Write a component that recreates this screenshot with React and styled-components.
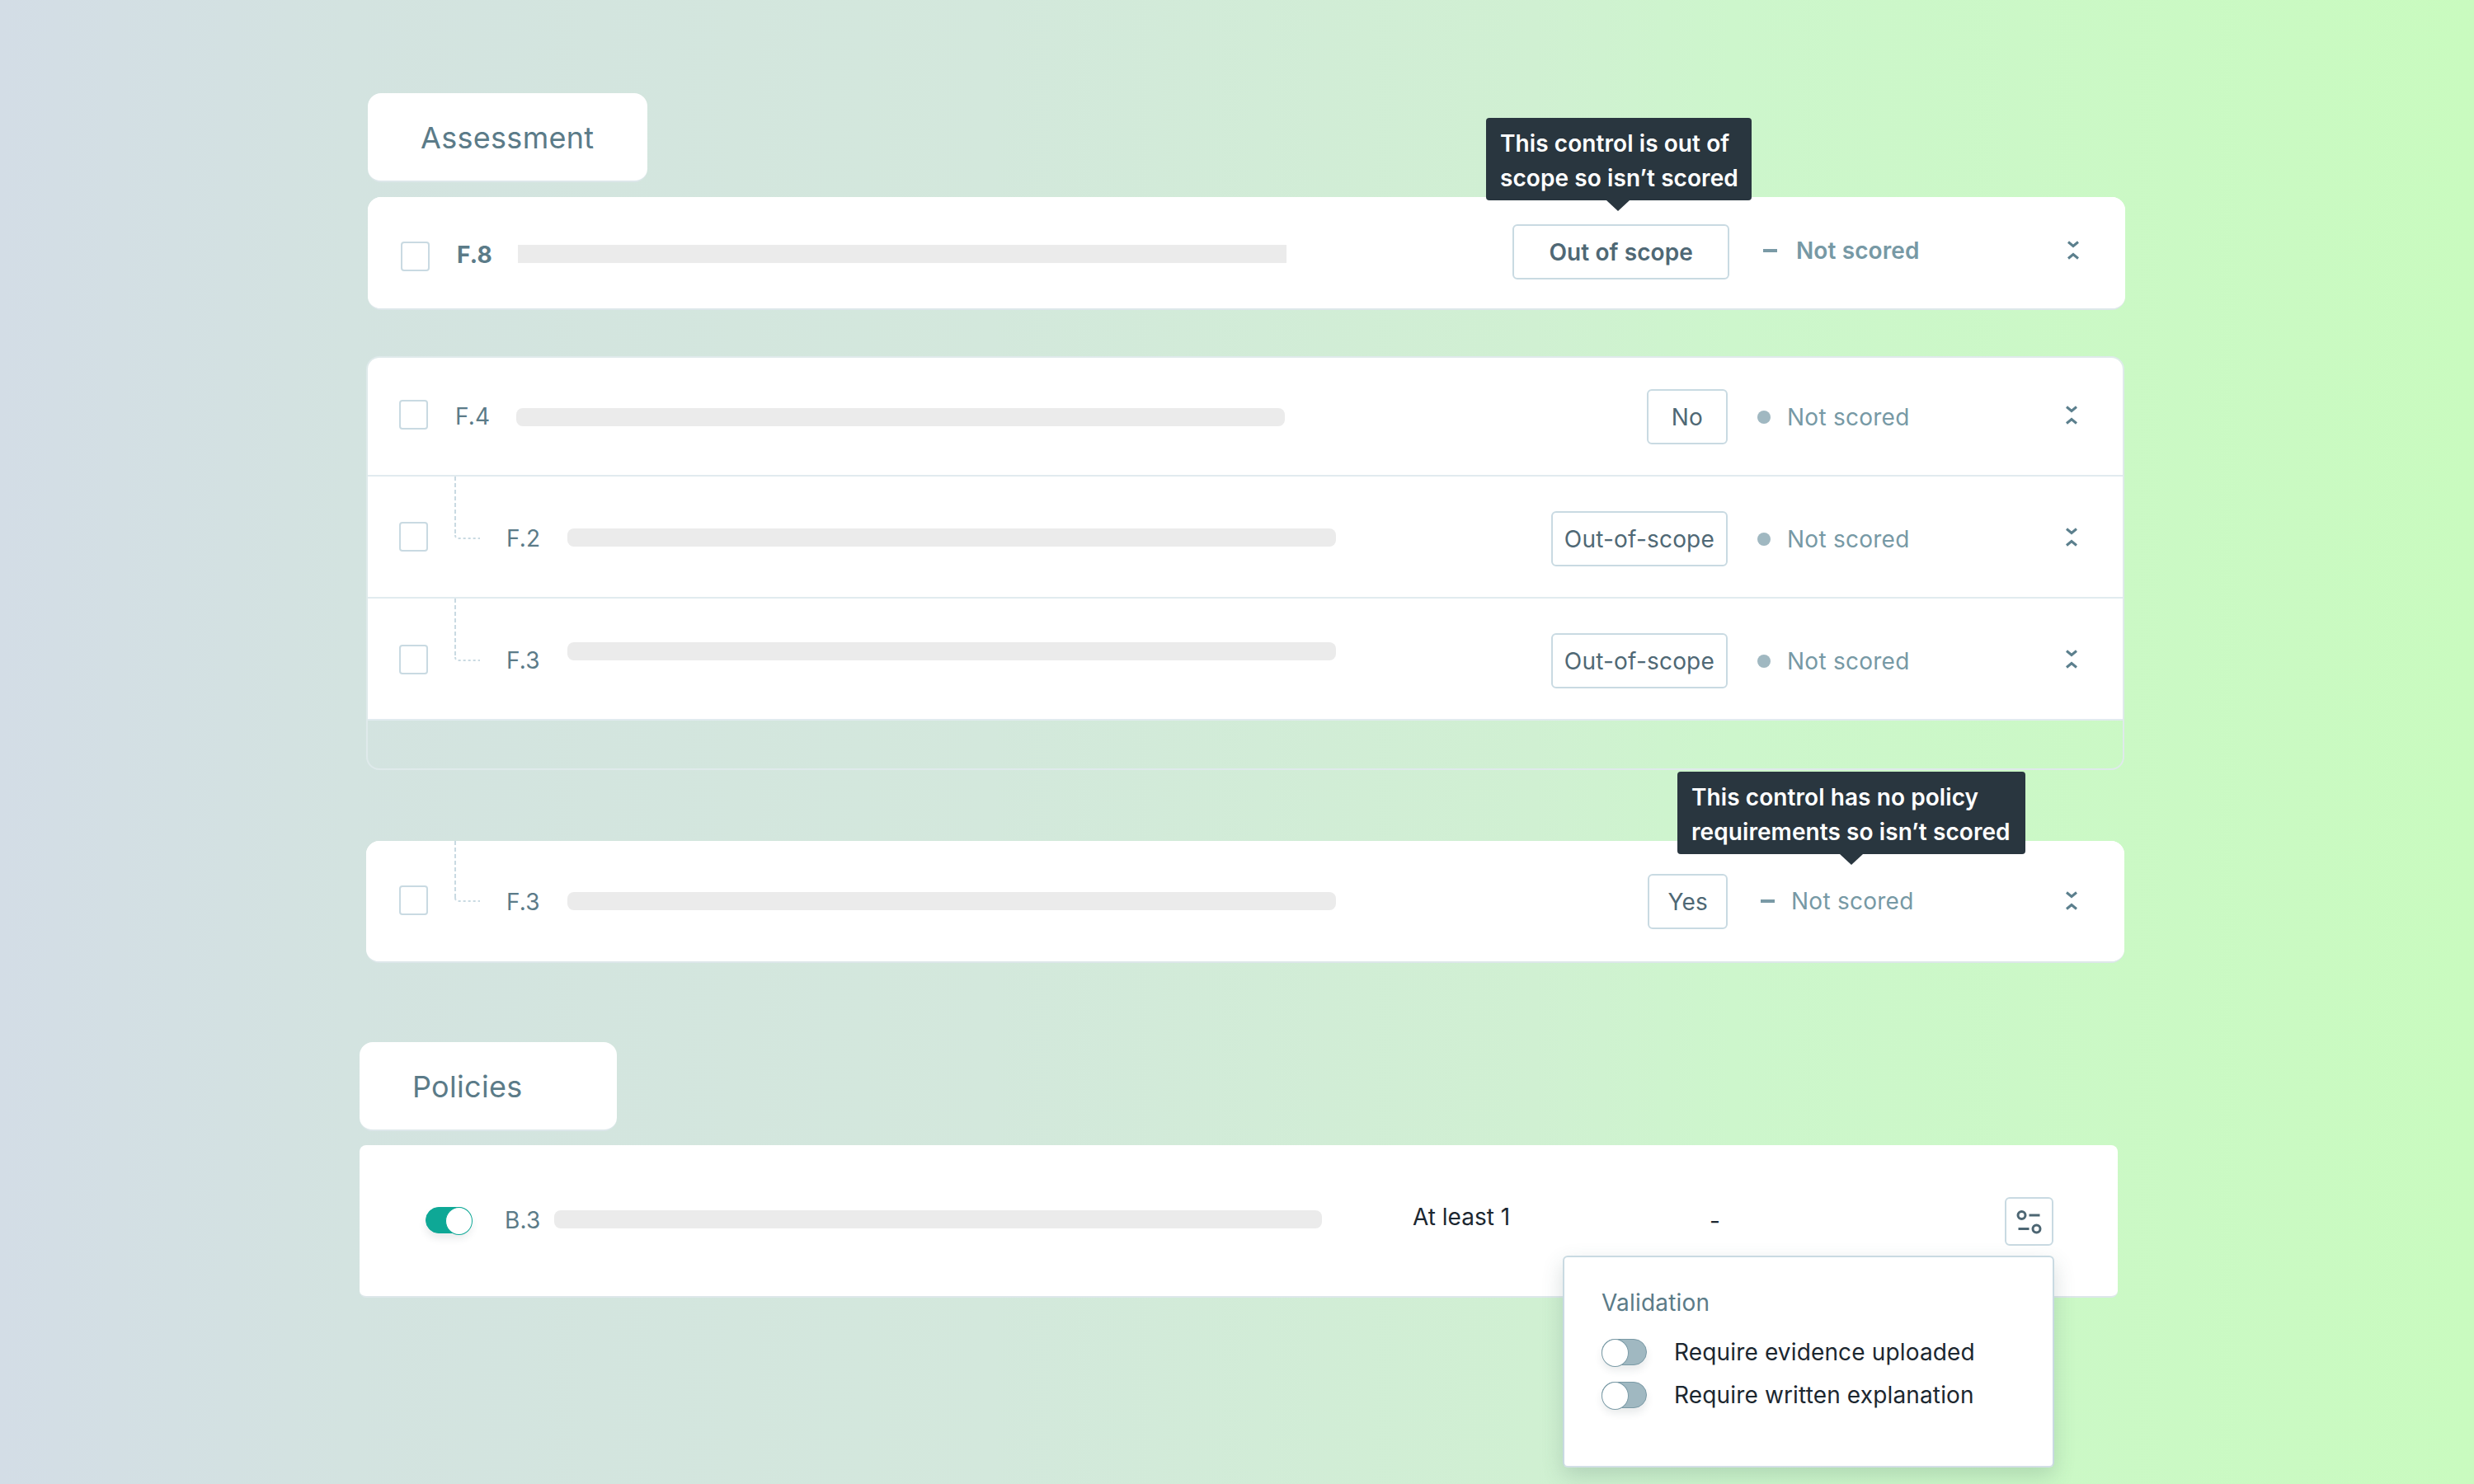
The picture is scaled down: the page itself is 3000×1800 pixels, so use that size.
import React from 'react';
import styled, { createGlobalStyle } from 'styled-components';

const GlobalStyle = createGlobalStyle`
    html, body {
        margin: 0;
        padding: 0;
    }
    body {
        font-family: 'Inter', 'Liberation Sans', sans-serif;
        font-size: 28px;
        letter-spacing: 0.2px;
    }
    * {
        box-sizing: border-box;
    }
`;

const Page = styled.div`
    width: 3000px;
    height: 1800px;
    overflow: hidden;
    padding-top: 113px;
    background: linear-gradient(90deg, #d3dde6 0%, #d3e3e0 14%, #d3e8dc 40%, #d0f0d2 62%, #cdf6cc 70%, #c9fbbf 100%);
`;

const Tab = styled.div`
    width: ${p => p.$width}px;
    height: 108px;
    margin-left: ${p => p.$left}px;
    margin-top: ${p => p.$top || 0}px;
    padding: 2px 0 0 64px;
    display: flex;
    align-items: center;
    background: #fff;
    border-radius: 16px;
    border-bottom: 2px solid #dde7ea;
    font-size: 36px;
    line-height: 44px;
    letter-spacing: 0.3px;
    color: #5b7b88;
`;

const Card = styled.div`
    position: relative;
    width: ${p => p.$width}px;
    height: ${p => p.$height}px;
    margin-left: ${p => p.$left}px;
    margin-top: ${p => p.$top}px;
    background: #fff;
    border-radius: ${p => p.$radius || 16}px;
    border-bottom: 2px solid #dde7ea;
`;

const Group = styled.div`
    width: 2132px;
    margin-left: 444px;
    margin-top: 56px;
    border: 2px solid #dfeaeb;
    border-radius: 16px;
`;

const GroupFooter = styled.div`
    height: 58px;
`;

const Row = styled.div`
    position: relative;
    display: flex;
    align-items: flex-start;
    height: ${p => p.$height}px;
    padding-left: ${p => p.$left}px;
    padding-right: ${p => p.$right}px;
    background: #fff;
    border-bottom: ${p => (p.$divider ? '2px solid #e1ebef' : 'none')};
    border-radius: ${p => (p.$first ? '14px 14px 0 0' : p.$plain ? '16px' : '0')};
`;

const Checkbox = styled.div`
    flex: 0 0 35px;
    height: 36px;
    margin-top: ${p => p.$top}px;
    border: 2px solid #c9dae2;
    border-radius: 4px;
    background: #fff;
`;

const Code = styled.div`
    flex: 0 0 ${p => p.$width || 74}px;
    margin-left: ${p => p.$left}px;
    margin-top: ${p => p.$top}px;
    font-size: 28px;
    line-height: 28px;
    font-weight: ${p => (p.$bold ? 700 : 400)};
    color: #5b7b88;
`;

const Bar = styled.div`
    flex: 0 0 ${p => p.$width || 932}px;
    height: 22px;
    margin-top: ${p => p.$top}px;
    background: #ebebeb;
    border-radius: ${p => (p.$square ? 0 : 8)}px;
`;

const Pill = styled.div`
    height: 67px;
    margin-left: auto;
    margin-top: ${p => p.$top}px;
    padding: 0 ${p => p.$pad}px;
    display: flex;
    align-items: center;
    background: #fff;
    border: 2px solid #c9dae2;
    border-radius: 6px;
    font-size: 28px;
    font-weight: ${p => (p.$bold ? 600 : 400)};
    letter-spacing: ${p => (p.$bold ? 0.1 : 0.2)}px;
    color: #4f6875;
`;

const Status = styled.div`
    flex: 0 0 410px;
    display: flex;
    align-items: center;
    gap: ${p => p.$gap}px;
    margin-top: ${p => p.$top}px;
    padding-left: ${p => p.$pad}px;
    font-size: 28px;
    line-height: 28px;
    font-weight: ${p => (p.$bold ? 600 : 400)};
    letter-spacing: ${p => (p.$bold ? 0.1 : 0.25)}px;
    color: #7799a5;
`;

const Dot = styled.span`
    width: 16px;
    height: 16px;
    border-radius: 50%;
    background: #a0b8c1;
`;

const Dash = styled.span`
    width: 17px;
    height: 4px;
    background: #7a9aa6;
`;

const ChevronSvg = styled.svg`
    flex: 0 0 14px;
    margin-top: ${p => p.$top}px;
`;

const Chevrons = ({ top }) => (
    <ChevronSvg $top={top} width="14" height="23" viewBox="0 0 14 23" fill="none" stroke="#5b7f8d" strokeWidth="3">
        <path d="M1 1.5 L7 6.5 L13 1.5" />
        <path d="M1 21.5 L7 16.5 L13 21.5" />
    </ChevronSvg>
);

const ConnectorSvg = styled.svg`
    position: absolute;
    left: ${p => p.$left}px;
    top: 0;
`;

// dashed elbow from the parent row down to the child code
const Connector = ({ height, left }) => (
    <ConnectorSvg $left={left} width="34" height={height} fill="none" stroke="#c9dae2" strokeWidth="2">
        <path d={`M2 0 V${height - 5}`} strokeDasharray="5 3" />
        <path d={`M2 ${height - 5} Q2 ${height - 1} 6 ${height - 1} H32`} strokeDasharray="3 3" />
    </ConnectorSvg>
);

const Tooltip = styled.div`
    position: absolute;
    z-index: 2;
    left: ${p => p.$left}px;
    top: ${p => p.$top}px;
    width: ${p => p.$width}px;
    height: 100px;
    padding: 10px 0 0 17px;
    background: #29363f;
    border-radius: 4px;
    color: #fff;
    font-size: 28px;
    font-weight: 600;
    line-height: 42px;
    letter-spacing: 0.08px;
    white-space: pre;

    &::after {
        content: '';
        position: absolute;
        left: ${p => p.$arrow - 14}px;
        bottom: -13px;
        width: 28px;
        height: 13px;
        background: #29363f;
        clip-path: polygon(0 0, 100% 0, 50% 100%);
    }
`;

const PolicyRow = styled.div`
    display: flex;
    align-items: flex-start;
    padding: 0 78px 0 80px;
`;

const ToggleTrack = styled.div`
    position: relative;
    flex: 0 0 ${p => p.$width}px;
    height: 32px;
    margin-top: ${p => p.$top || 0}px;
    border-radius: 16px;
    background: ${p => (p.$on ? '#0ea896' : '#a0b8c1')};
    border: 1.5px solid ${p => (p.$on ? '#0ea896' : '#7a9aa6')};
    box-shadow: 0 6px 10px rgba(40, 60, 70, 0.1);

    &::after {
        content: '';
        position: absolute;
        top: -1.5px;
        ${p => (p.$on ? 'right: -1.5px;' : 'left: -1.5px;')}
        width: 31px;
        height: 32px;
        border-radius: 50%;
        background: #fff;
        border: 1.5px solid ${p => (p.$on ? '#0ea896' : '#7a9aa6')};
    }
`;

const Count = styled.div`
    flex: 0 0 360px;
    margin-left: 110px;
    margin-top: 73px;
    font-size: 28px;
    line-height: 28px;
    letter-spacing: 0;
    color: #1c2730;
`;

const NoValue = styled.div`
    margin-top: 78px;
    font-size: 28px;
    line-height: 28px;
    color: #1c2730;
`;

const IconButton = styled.div`
    width: 59px;
    height: 59px;
    margin-left: auto;
    margin-top: 63px;
    display: flex;
    align-items: center;
    justify-content: center;
    background: #fff;
    border: 2px solid #c9dae2;
    border-radius: 6px;
`;

const Popup = styled.div`
    position: absolute;
    z-index: 2;
    left: 1459px;
    top: 134px;
    width: 596px;
    height: 257px;
    padding: 41px 45px 0;
    background: #fff;
    border: 2px solid #c9dae2;
    border-bottom-color: #d3dfe6;
    border-radius: 6px;
    box-shadow: 0 10px 26px rgba(60, 90, 90, 0.2);
`;

const PopupTitle = styled.div`
    margin-bottom: 30px;
    font-size: 28px;
    line-height: 28px;
    color: #5b7b88;
`;

const OptionList = styled.div`
    display: flex;
    flex-direction: column;
    gap: 20px;
`;

const Option = styled.div`
    display: flex;
    align-items: center;
    gap: 33px;
    font-size: 28px;
    line-height: 32px;
    letter-spacing: 0.15px;
    color: #1c2730;
`;

const rows = [
    { code: 'F.4', pill: 'No', pad: 28, check: 51, codeTop: 57, barTop: 61, pillTop: 38, statusTop: 58, chevTop: 58, height: 144, first: true },
    { code: 'F.2', pill: 'Out-of-scope', pad: 14, child: 76, check: 55, codeTop: 61, barTop: 63, pillTop: 42, statusTop: 62, chevTop: 62, height: 148 },
    { code: 'F.3', pill: 'Out-of-scope', pad: 14, child: 76, check: 56, codeTop: 61, barTop: 53, pillTop: 42, statusTop: 62, chevTop: 62, height: 148 },
];

const App = () => {
    return (
        <Page>
            <GlobalStyle />
            <Tab $width={339} $left={446}>Assessment</Tab>

            <Card $width={2131} $height={137} $left={446} $top={18}>
                <Tooltip $left={1356} $top={-96} $width={322} $arrow={160}>{'This control is out of\nscope so isn’t scored'}</Tooltip>
                <Row $height={135} $left={40} $right={56} $plain>
                    <Checkbox $top={54} />
                    <Code $left={33} $top={56} $bold>F.8</Code>
                    <Bar $top={58} $square />
                    <Pill $top={33} $pad={42} $bold>Out of scope</Pill>
                    <Status $top={51} $pad={41} $gap={23} $bold><Dash />Not scored</Status>
                    <Chevrons top={53} />
                </Row>
            </Card>

            <Group>
                {rows.map(row => (
                    <Row key={row.code} $height={row.height} $left={38} $right={55} $divider $first={row.first}>
                        {row.child && <Connector height={row.child} left={104} />}
                        <Checkbox $top={row.check} />
                        <Code $left={row.child ? 95 : 33} $top={row.codeTop}>{row.code}</Code>
                        <Bar $top={row.barTop} />
                        <Pill $top={row.pillTop} $pad={row.pad}>{row.pill}</Pill>
                        <Status $top={row.statusTop} $pad={36} $gap={20}><Dot />Not scored</Status>
                        <Chevrons top={row.chevTop} />
                    </Row>
                ))}
                <GroupFooter />
            </Group>

            <Card $width={2132} $height={148} $left={444} $top={86}>
                <Tooltip $left={1590} $top={-84} $width={422} $arrow={211}>{'This control has no policy\nrequirements so isn’t scored'}</Tooltip>
                <Row $height={146} $left={40} $right={57} $plain>
                    <Connector height={74} left={106} />
                    <Checkbox $top={54} />
                    <Code $left={95} $top={60}>F.3</Code>
                    <Bar $top={62} />
                    <Pill $top={40} $pad={22}>Yes</Pill>
                    <Status $top={59} $pad={40} $gap={20}><Dash />Not scored</Status>
                    <Chevrons top={61} />
                </Row>
            </Card>

            <Tab $width={312} $left={436} $top={96}>Policies</Tab>

            <Card $width={2132} $height={185} $left={436} $top={17} $radius={8}>
                <PolicyRow>
                    <ToggleTrack $on $width={56} $top={75} />
                    <Code $left={40} $top={77} $width={60}>B.3</Code>
                    <Bar $top={79} $width={931} />
                    <Count>At least 1</Count>
                    <NoValue>-</NoValue>
                    <IconButton>
                        <svg width="42" height="30" viewBox="0 0 42 30" fill="none" stroke="#4d6673" strokeWidth="3">
                            <circle cx="11.5" cy="7" r="4.5" />
                            <path d="M20.5 7 H33.5" />
                            <path d="M7.5 23.5 H20.5" />
                            <circle cx="29.5" cy="23.5" r="4.5" />
                        </svg>
                    </IconButton>
                </PolicyRow>
                <Popup>
                    <PopupTitle>Validation</PopupTitle>
                    <OptionList>
                        <Option><ToggleTrack $width={55} />Require evidence uploaded</Option>
                        <Option><ToggleTrack $width={55} />Require written explanation</Option>
                    </OptionList>
                </Popup>
            </Card>
        </Page>
    );
};

export default App;
